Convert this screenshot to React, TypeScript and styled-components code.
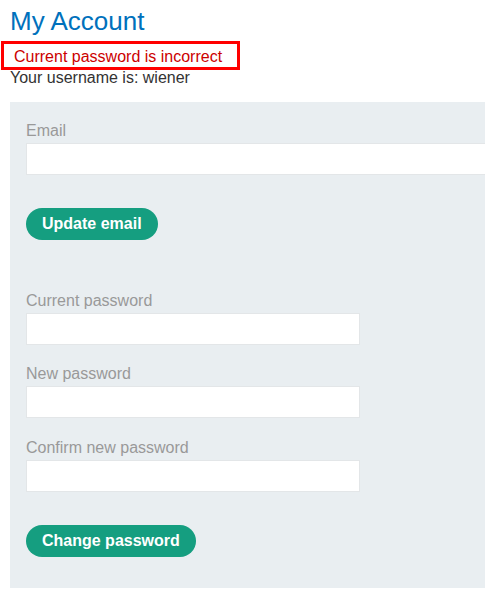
import React from 'react';
import styled, { createGlobalStyle } from 'styled-components';

const GlobalStyle = createGlobalStyle`
    html, body {
        margin: 0;
        padding: 0;
        background: #ffffff;
        overflow: hidden;
    }
    body {
        font-family: "Liberation Sans", Arial, sans-serif;
        color: #333333;
    }
`;

const Page = styled.div`
    padding: 6px 0 0 10px;
`;

const Title = styled.h1`
    margin: 0;
    font-size: 26px;
    line-height: 30px;
    font-weight: 400;
    color: #0071bc;
`;

const ErrorBox = styled.p`
    box-sizing: border-box;
    width: 239px;
    margin: 5px 0 0 -9px;
    padding: 2px 10px 0;
    border: 3px solid #ff0000;
    font-size: 16px;
    line-height: 21px;
    color: #cc0000;
`;

const Username = styled.p`
    margin: 0;
    font-size: 16px;
    line-height: 16px;
    color: #333333;
`;

const Panel = styled.div`
    margin-top: 16px;
    padding: 19px 0 31px 16px;
    background: #e9eef1;
    overflow: hidden;
`;

const Form = styled.form<{ $gap?: number }>`
    display: flex;
    flex-direction: column;
    align-items: flex-start;
    margin-top: ${(p) => p.$gap || 0}px;
`;

// $after is the space under the field; the last field of a form sits further from its button
const Field = styled.div<{ $after?: number }>`
    display: flex;
    flex-direction: column;
    margin-bottom: ${(p) => p.$after ?? 19}px;
`;

const Label = styled.label`
    display: block;
    font-size: 16px;
    line-height: 20px;
    color: #999999;
`;

const Input = styled.input<{ $wide?: boolean }>`
    box-sizing: border-box;
    width: ${(p) => (p.$wide ? '480px' : '334px')};
    height: 32px;
    margin: 2px 0 0;
    padding: 0 8px;
    border: 1px solid #e3e6e8;
    background: #ffffff;
    font-family: inherit;
    font-size: 16px;
    outline: none;
`;

const Button = styled.button`
    height: 32px;
    padding: 0 16px;
    border: none;
    border-radius: 16px;
    background: #159e80;
    color: #ffffff;
    font-family: "Liberation Sans", Arial, sans-serif;
    font-size: 16px;
    font-weight: 700;
    line-height: 32px;
    cursor: pointer;
`;

const passwordFields = [
    { name: 'Current password', after: 19 },
    { name: 'New password', after: 20 },
    { name: 'Confirm new password', after: 33 },
];

export default function App() {
    return (
        <>
            <GlobalStyle />
            <Page>
                <Title>My Account</Title>
                <ErrorBox>Current password is incorrect</ErrorBox>
                <Username>Your username is: wiener</Username>
                <Panel>
                    <Form onSubmit={(e) => e.preventDefault()}>
                        <Field $after={33}>
                            <Label>Email</Label>
                            <Input $wide type="email" />
                        </Field>
                        <Button type="submit">Update email</Button>
                    </Form>
                    <Form $gap={51} onSubmit={(e) => e.preventDefault()}>
                        {passwordFields.map((f) => (
                            <Field key={f.name} $after={f.after}>
                                <Label>{f.name}</Label>
                                <Input type="password" />
                            </Field>
                        ))}
                        <Button type="submit">Change password</Button>
                    </Form>
                </Panel>
            </Page>
        </>
    );
}
